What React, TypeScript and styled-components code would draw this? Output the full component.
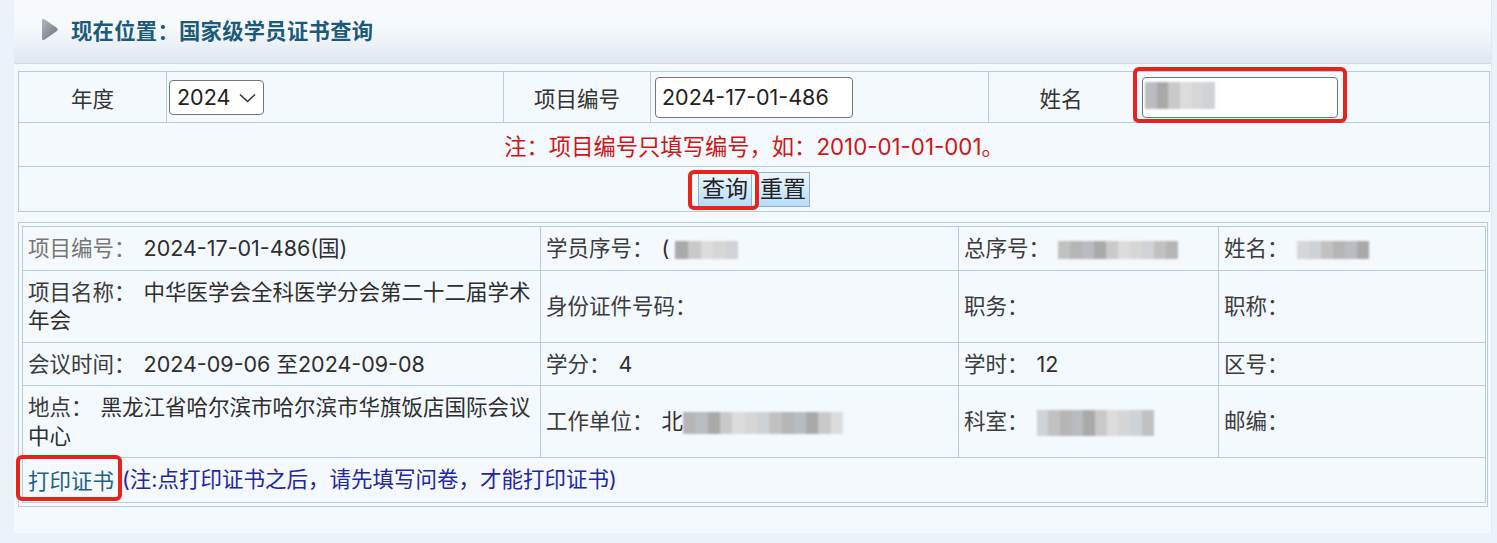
import { ReactNode } from "react";
import styled, { createGlobalStyle } from "styled-components";

const FONT = `Inter, "Noto Sans CJK SC", sans-serif`;
const LINE = "#b7ccd5";

const GlobalStyle = createGlobalStyle`
  body {
    margin: 0;
    background: #eaf3f9;
    font-family: ${FONT};
    color: #333;
  }
`;

const Panel = styled.div`
  margin-left: 14px;
  width: 1478px;
  height: 533px;
  background: #f3f9fd;
  box-sizing: border-box;
  border-right: 1px solid #dde8ef;
`;

const Header = styled.div`
  height: 64px;
  box-sizing: border-box;
  display: flex;
  align-items: center;
  gap: 12px;
  padding: 0 0 4px 27px;
  background: linear-gradient(#f8fbfe 0%, #f5f9fc 45%, #dfe8f0 100%);
  border-bottom: 1px solid #d0dce5;
`;

const Title = styled.h1`
  margin: 0;
  font-size: 21.3px;
  font-weight: 700;
  color: #1c5a7c;
  letter-spacing: 0.3px;
`;

const Body = styled.div`
  padding: 7px 3px 0 4px;
`;

const Grid = styled.table`
  width: 100%;
  table-layout: fixed;
  border-collapse: collapse;
  font-size: 21.5px;
  background: #f4f9fd;
`;

const SearchGrid = styled(Grid)`
  border: 1px solid ${LINE};
`;

const Cell = styled.td<{ $align?: "left" | "center" }>`
  border: 1px solid ${LINE};
  padding: 0 4px;
  text-align: ${(p) => p.$align ?? "left"};
  vertical-align: middle;
`;

const SearchCell = styled(Cell)<{ $h: number }>`
  height: ${(p) => p.$h}px;
`;

const Note = styled.span`
  color: #d11414;
  font-size: 22.3px;
`;

const SelectBox = styled.span`
  position: relative;
  display: inline-block;
  vertical-align: middle;
  svg {
    position: absolute;
    right: 8px;
    top: 13px;
    pointer-events: none;
  }
`;

const Select = styled.select`
  appearance: none;
  width: 95px;
  height: 35px;
  font: inherit;
  font-size: 21.5px;
  color: #222;
  background: #fff;
  border: 1px solid #767676;
  border-radius: 4px;
  padding: 0 0 0 7px;
`;

const Input = styled.input<{ $w: number }>`
  width: ${(p) => p.$w}px;
  height: 41px;
  box-sizing: border-box;
  font: inherit;
  font-size: 21.5px;
  color: #222;
  background: #fff;
  border: 1px solid #767676;
  border-radius: 4px;
  padding: 0 6px;
  vertical-align: middle;
`;

const Button = styled.button`
  height: 35px;
  padding: 0 3px;
  margin: 0 2px;
  font-family: ${FONT};
  font-size: 23px;
  line-height: 1;
  color: #222;
  border: 1px solid #8fb2cc;
  background: linear-gradient(#eef7fe, #b6dbf8);
  vertical-align: middle;
`;

const Mark = styled.span<{ $t: number; $r: number; $b: number; $l: number }>`
  position: relative;
  display: inline-block;
  vertical-align: middle;
  &::after {
    content: "";
    position: absolute;
    top: ${(p) => -p.$t}px;
    right: ${(p) => -p.$r}px;
    bottom: ${(p) => -p.$b}px;
    left: ${(p) => -p.$l}px;
    border: 4px solid #e8231c;
    border-radius: 6px;
    pointer-events: none;
  }
`;

const Mosaic = styled.span<{ $w: number; $h: number }>`
  display: inline-flex;
  width: ${(p) => p.$w}px;
  height: ${(p) => p.$h}px;
  vertical-align: middle;
  filter: blur(0.8px);
`;

const Tile = styled.span<{ $c: string }>`
  flex: 1;
  background: ${(p) => p.$c};
`;

const NameBox = styled.span`
  position: relative;
  display: inline-block;
  vertical-align: middle;
  ${Mosaic} {
    position: absolute;
    left: 3px;
    top: 5px;
  }
`;

const ResultFrame = styled.div`
  margin-top: 10px;
  border: 1px solid ${LINE};
  padding: 3px;
`;

const ResultGrid = styled(Grid)`
  line-height: 28.5px;
  ${Cell} {
    height: 43px;
    box-sizing: border-box;
    padding: 7px 5px;
  }
`;

const Label = styled.span<{ $soft?: boolean }>`
  color: ${(p) => (p.$soft ? "#767676" : "#3c3c3c")};
  margin-right: 8px;
`;

const Value = styled.span`
  color: #2e2e2e;
`;

const PrintLink = styled.a`
  color: #1f6380;
  text-decoration: none;
`;

const PrintNote = styled.span`
  color: #2424a6;
  margin-left: 8px;
`;

const greys = ["#c9c9c9", "#b5b5b5", "#d6d6d6", "#a9a9a9", "#c1c1c1", "#dcdcdc", "#b9bcc0", "#cfd2d6"];

const Blur = ({ w, h, seed = 0 }: { w: number; h: number; seed?: number }) => {
  const count = Math.max(3, Math.round(w / 12));
  return (
    <Mosaic $w={w} $h={h}>
      {Array.from({ length: count }, (_, i) => (
        <Tile key={i} $c={greys[(i * 5 + seed * 3) % greys.length]} />
      ))}
    </Mosaic>
  );
};

const Arrow = () => (
  <svg width="18" height="23" viewBox="0 0 18 23">
    <defs>
      <linearGradient id="arr" x1="0" y1="0" x2="1" y2="1">
        <stop offset="0" stopColor="#b2b8be" />
        <stop offset="1" stopColor="#68717a" />
      </linearGradient>
    </defs>
    <path d="M3.4 1.2 Q1 0 1 2.8 V20.2 Q1 23 3.4 21.8 L16 13 Q17.6 11.5 16 10 Z" fill="url(#arr)" />
  </svg>
);

const Chevron = () => (
  <svg width="17" height="10" viewBox="0 0 17 10">
    <path d="M1 1.5 L8.5 8.5 L16 1.5" fill="none" stroke="#333" strokeWidth="1.6" />
  </svg>
);

const Field = ({ label, value, soft }: { label: string; value?: ReactNode; soft?: boolean }) => (
  <Cell>
    <Label $soft={soft}>{label}</Label>
    {value && <Value>{value}</Value>}
  </Cell>
);

export default function App() {
  return (
    <>
      <GlobalStyle />
      <Panel>
        <Header>
          <Arrow />
          <Title>现在位置：国家级学员证书查询</Title>
        </Header>
        <Body>
          <SearchGrid>
            <colgroup>
              <col width={148} />
              <col width={337} />
              <col width={147} />
              <col width={338} />
              <col width={145} />
              <col width={356} />
            </colgroup>
            <tbody>
              <tr>
                <SearchCell $h={50} $align="center">年度</SearchCell>
                <SearchCell $h={50} style={{ paddingLeft: 2 }}>
                  <SelectBox>
                    <Select defaultValue="2024">
                      <option>2024</option>
                      <option>2023</option>
                    </Select>
                    <Chevron />
                  </SelectBox>
                </SearchCell>
                <SearchCell $h={50} $align="center">项目编号</SearchCell>
                <SearchCell $h={50}>
                  <Input $w={198} defaultValue="2024-17-01-486" />
                </SearchCell>
                <SearchCell $h={50} $align="center">姓名</SearchCell>
                <SearchCell $h={50} style={{ paddingLeft: 8 }}>
                  <Mark $t={10} $r={9} $b={5} $l={9}>
                    <NameBox>
                      <Input $w={196} defaultValue="" />
                      <Blur w={70} h={27} seed={2} />
                    </NameBox>
                  </Mark>
                </SearchCell>
              </tr>
              <tr>
                <SearchCell $h={43} $align="center" colSpan={6}>
                  <Note>注：项目编号只填写编号，如：2010-01-01-001。</Note>
                </SearchCell>
              </tr>
              <tr>
                <SearchCell $h={44} $align="center" colSpan={6}>
                  <Mark $t={2} $r={5} $b={3} $l={8}>
                    <Button>查询</Button>
                  </Mark>
                  <Button>重置</Button>
                </SearchCell>
              </tr>
            </tbody>
          </SearchGrid>

          <ResultFrame>
            <ResultGrid>
              <colgroup>
                <col width={518} />
                <col width={418} />
                <col width={260} />
                <col width={267} />
              </colgroup>
              <tbody>
                <tr>
                  <Field soft label="项目编号：" value="2024-17-01-486(国)" />
                  <Field label="学员序号：" value={<>( <Blur w={63} h={18} seed={1} /></>} />
                  <Field label="总序号：" value={<Blur w={120} h={18} seed={4} />} />
                  <Field label="姓名：" value={<Blur w={72} h={18} seed={6} />} />
                </tr>
                <tr>
                  <Field label="项目名称：" value="中华医学会全科医学分会第二十二届学术年会" />
                  <Field label="身份证件号码：" />
                  <Field label="职务：" />
                  <Field label="职称：" />
                </tr>
                <tr>
                  <Field label="会议时间：" value="2024-09-06 至2024-09-08" />
                  <Field label="学分：" value="4" />
                  <Field label="学时：" value="12" />
                  <Field label="区号：" />
                </tr>
                <tr>
                  <Field label="地点：" value="黑龙江省哈尔滨市哈尔滨市华旗饭店国际会议中心" />
                  <Field label="工作单位：" value={<>北<Blur w={160} h={22} seed={3} /></>} />
                  <Field label="科室：" value={<Blur w={117} h={26} seed={5} />} />
                  <Field label="邮编：" />
                </tr>
                <tr>
                  <Cell colSpan={4}>
                    <Mark $t={12} $r={8} $b={6} $l={12}>
                      <PrintLink href="#">打印证书</PrintLink>
                    </Mark>
                    <PrintNote>(注:点打印证书之后，请先填写问卷，才能打印证书)</PrintNote>
                  </Cell>
                </tr>
              </tbody>
            </ResultGrid>
          </ResultFrame>
        </Body>
      </Panel>
    </>
  );
}
